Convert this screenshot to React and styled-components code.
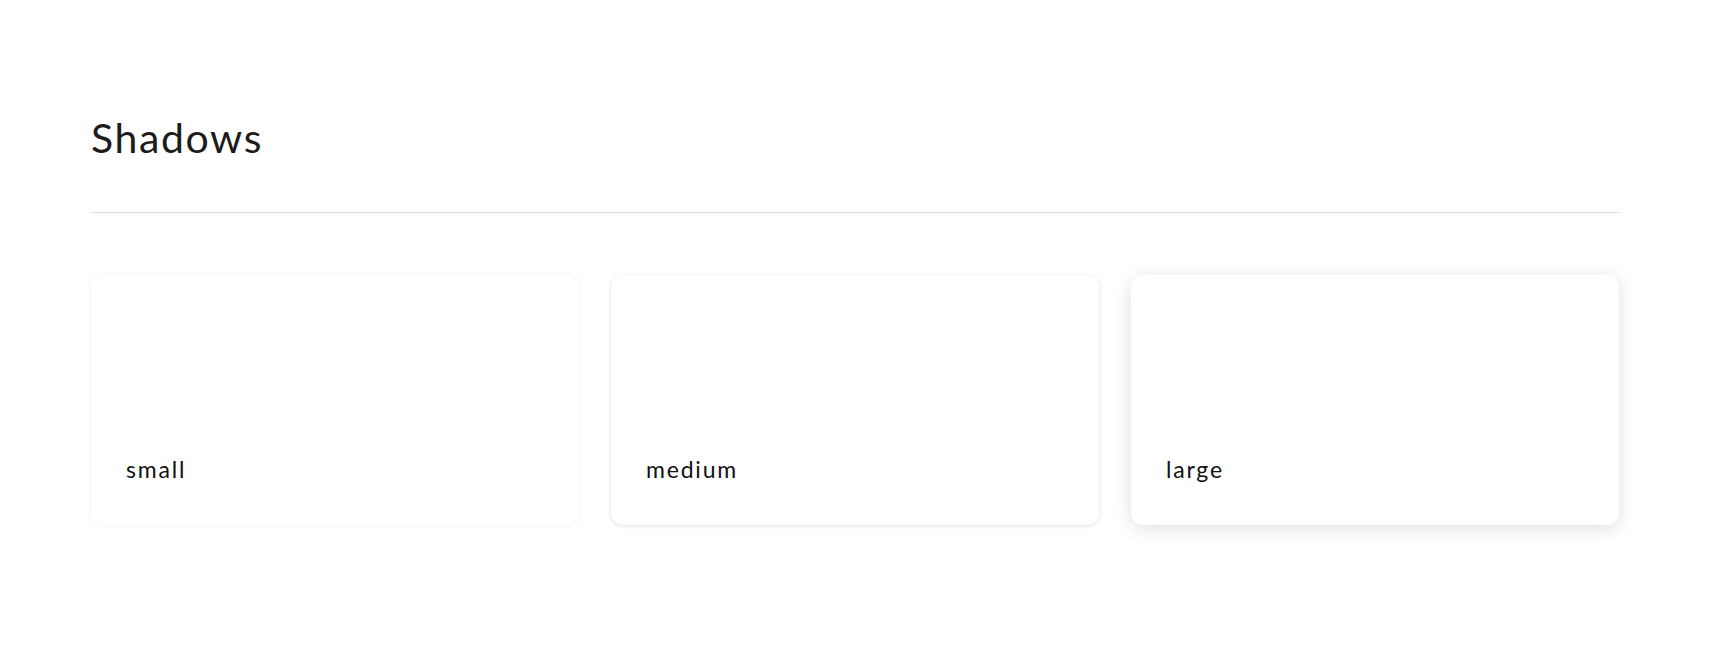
import React from 'react';
import styled, { createGlobalStyle } from 'styled-components';

const GlobalStyle = createGlobalStyle`
  html, body {
    margin: 0;
    background: #ffffff;
    font-family: Lato, "Liberation Sans", sans-serif;
    color: #1a1a1a;
  }
`;

const Page = styled.main`
  min-height: 100vh;
  box-sizing: border-box;
  padding: 114px 91px 60px;
`;

const Title = styled.h1`
  margin: 0;
  font-size: 41px;
  line-height: 48px;
  font-weight: 400;
  letter-spacing: 1.6px;
  color: #1c1c1c;
`;

const Divider = styled.hr`
  margin: 50px 0 0;
  border: 0;
  border-top: 1px solid #dedede;
`;

const Grid = styled.div`
  display: grid;
  grid-template-columns: repeat(3, 1fr);
  gap: 32px;
  margin-top: 62px;
`;

const shadows = {
  small: '0 0 6px rgba(0, 0, 0, 0.05)',
  medium: '0 1px 4px rgba(0, 0, 0, 0.13)',
  large: '0 3px 18px rgba(0, 0, 0, 0.13)',
};

const Card = styled.div`
  height: 250px;
  border-radius: 12px;
  background: #ffffff;
  box-shadow: ${({ size }) => shadows[size]};
  display: flex;
  align-items: flex-end;
  padding: 0 35px 42px;
  box-sizing: border-box;
`;

const Label = styled.span`
  font-size: 23px;
  line-height: 28px;
  letter-spacing: 1.8px;
  color: #111111;
`;

const App = () => {
  return (
    <Page>
      <GlobalStyle />
      <Title>Shadows</Title>
      <Divider />
      <Grid>
        {['small', 'medium', 'large'].map((size) => (
          <Card key={size} size={size}>
            <Label>{size}</Label>
          </Card>
        ))}
      </Grid>
    </Page>
  );
};

export default App;
